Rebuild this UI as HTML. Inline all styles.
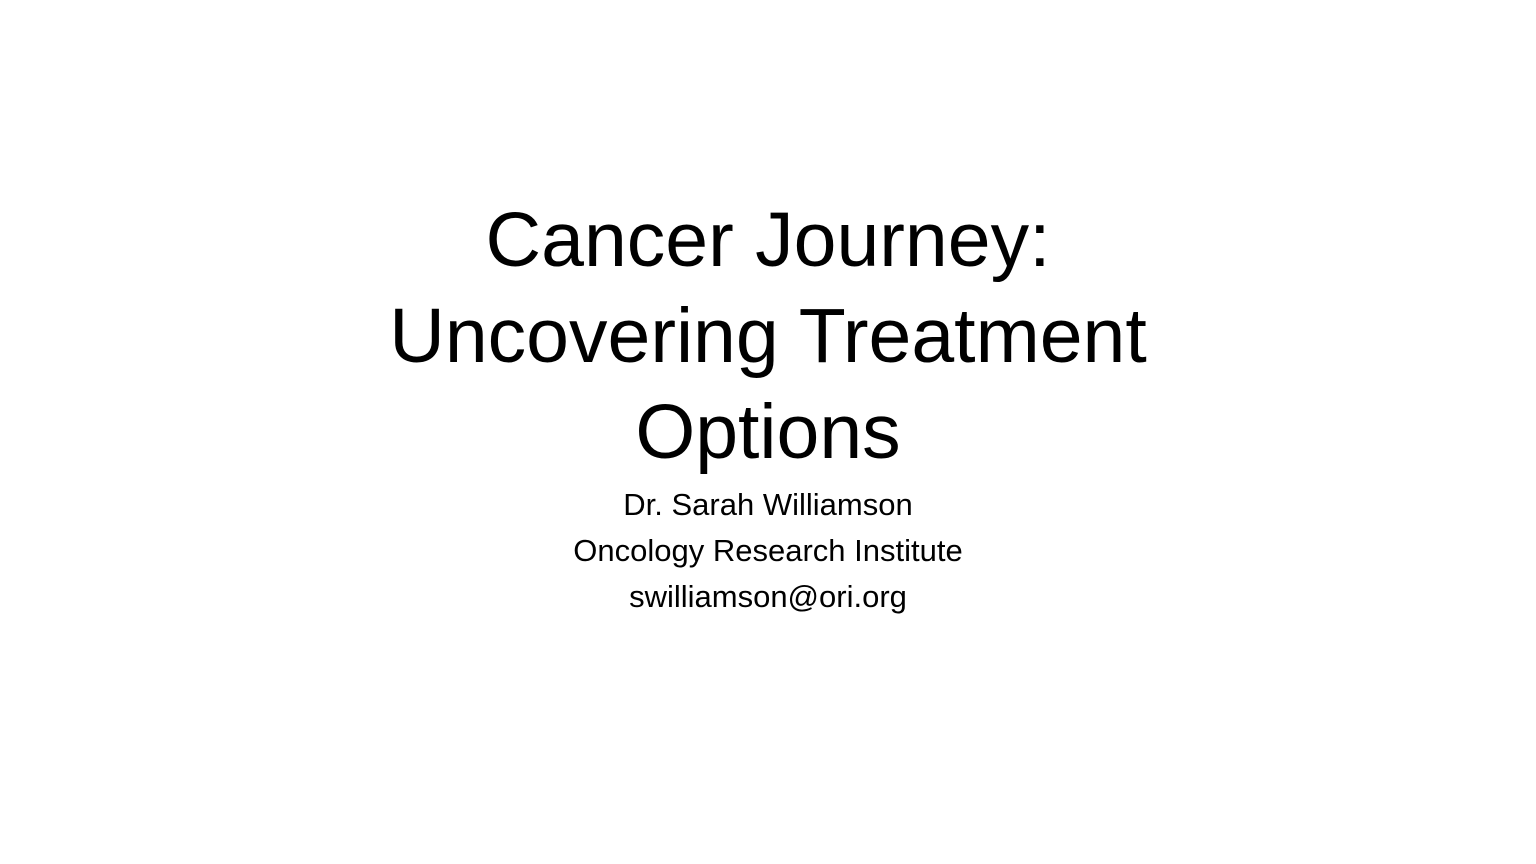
<!DOCTYPE html>
<html><head><meta charset="utf-8"><style>
html,body{margin:0;padding:0;background:#fff;}
body{width:1536px;height:864px;position:relative;overflow:hidden;font-family:"Liberation Sans",sans-serif;color:#000;}
.t{position:absolute;left:0;width:1536px;text-align:center;font-size:77px;line-height:96px;top:192px;}
.s{position:absolute;left:0;width:1536px;text-align:center;font-size:31px;line-height:46px;top:482px;}
</style></head><body>
<div class="t">Cancer Journey:<br>Uncovering Treatment<br>Options</div>
<div class="s">Dr. Sarah Williamson<br>Oncology Research Institute<br>swilliamson@ori.org</div>
</body></html>
